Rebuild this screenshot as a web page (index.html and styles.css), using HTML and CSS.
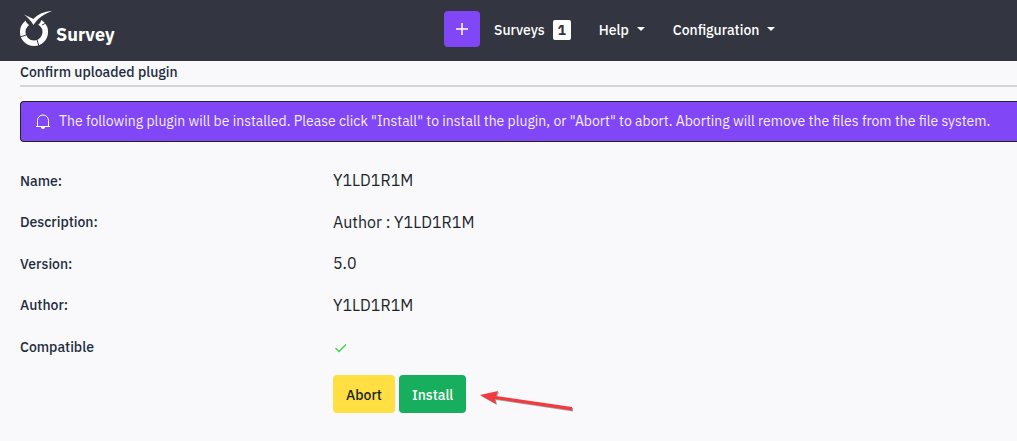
FILE: index.html
```html
<!DOCTYPE html>
<html lang="en">
<head>
<meta charset="utf-8">
<title>Confirm uploaded plugin</title>
<link rel="stylesheet" href="styles.css">
</head>
<body>
<header class="navbar">
  <a class="brand" href="#">
    <svg class="brand-logo" viewBox="0 0 32 36" aria-hidden="true">
      <circle class="ring" cx="14" cy="21" r="11.300"/>
      <path class="ring-cut" d="M13.500 19 6 11 5 4 24 4 20 12z"/>
      <path class="ring-gap" d="M6 24 0 26M17 29l2 6M22 14l6-3"/>
      <path class="mark" d="M4 3.500 13.500 8C18 3 24 .5 32 0 24 3 18 7 13.500 14 11 10 8 6.500 4 3.500z"/>
    </svg>
    <span>Survey</span>
  </a>
  <nav class="menu">
    <button class="create" type="button" aria-label="Create survey">
      <svg viewBox="0 0 12 12" aria-hidden="true"><path d="M6 0v12M0 6h12"/></svg>
    </button>
    <a class="menu-link" href="#">Surveys <span class="badge">1</span></a>
    <a class="menu-link" href="#">Help <span class="caret"></span></a>
    <a class="menu-link" href="#">Configuration <span class="caret"></span></a>
  </nav>
</header>
<main class="content">
  <h1 class="title">Confirm uploaded plugin</h1>
  <div class="alert" role="alert">
    <svg class="bell" viewBox="0 0 14 15" aria-hidden="true">
      <path class="bell-line" d="M0 12.500h14M1.500 12V6.500a5.500 5.500 0 0 1 11 0V12"/>
      <path class="bell-clapper" d="M5 13h4a2 2 0 0 1-4 0z"/>
    </svg>
    <span>The following plugin will be installed. Please click "Install" to install the plugin, or "Abort" to abort. Aborting will remove the files from the file system.</span>
  </div>
  <dl class="details">
    <dt>Name:</dt><dd>Y1LD1R1M</dd>
    <dt>Description:</dt><dd>Author : Y1LD1R1M</dd>
    <dt>Version:</dt><dd>5.0</dd>
    <dt>Author:</dt><dd>Y1LD1R1M</dd>
    <dt>Compatible</dt>
    <dd><svg class="check" viewBox="0 0 16 16" role="img" aria-label="Yes"><path d="M2.500 9 6 12.500 13 5.500"/></svg></dd>
  </dl>
  <div class="actions">
    <button class="btn btn-abort" type="button">Abort</button>
    <button class="btn btn-install" type="button">Install</button>
    <svg class="arrow" viewBox="0 0 96 22" aria-hidden="true">
      <path class="arrow-shadow" d="M1 6 19 2 17 7 93 18V21.500L16 10 17 15z"/>
      <path class="arrow-body" d="M0 5 18 1 16 6 92 17V20.500L15 9 16 14z"/>
    </svg>
  </div>
</main>
</body>
</html>
```
FILE: styles.css
```css
* { box-sizing: border-box; }
body {
  margin: 0;
  background: #f9f9fb;
  color: #212529;
  font: 16px/24px "IBM Plex Sans", Roboto, "Liberation Sans", sans-serif;
  overflow-x: hidden;
}
.navbar {
  display: grid;
  grid-template-columns: 424px 1fr;
  align-items: center;
  height: 61px;
  padding: 0 20px 3px;
  background: #333641;
}
.brand {
  display: flex;
  align-items: center;
  gap: 4px;
  color: #fff;
  font-size: 18px;
  font-weight: 700;
  text-decoration: none;
}
.brand span { padding-top: 11px; }
.brand-logo { width: 32px; height: 36px; }
.ring { fill: none; stroke: #fff; stroke-width: 5.500; }
.ring-cut { fill: #333641; }
.ring-gap { fill: none; stroke: #333641; stroke-width: 1; }
.mark { fill: #fff; }
.menu { display: flex; align-items: center; }
.create {
  display: grid;
  place-items: center;
  width: 36px;
  height: 36px;
  margin-right: 14px;
  padding: 0;
  border: 0;
  border-radius: 4px;
  background: #8146f6;
}
.create svg { width: 12px; height: 12px; fill: none; stroke: #fff; stroke-width: 1.500; }
.menu-link {
  display: flex;
  align-items: center;
  gap: 8px;
  margin-right: 28px;
  padding-top: 2px;
  color: #fff;
  font-size: 14px;
  font-weight: 500;
  text-decoration: none;
}
.badge {
  width: 18px;
  border-radius: 2px;
  background: #fff;
  color: #333641;
  font-weight: 700;
  line-height: 20px;
  text-align: center;
}
.caret {
  margin-bottom: 2px;
  border: 4px solid transparent;
  border-top-color: #fff;
  border-bottom: 0;
}
.content { padding-left: 20px; }
.title {
  margin: 0 0 14px;
  border-bottom: 2px solid #d3d4db;
  color: #1e2c3e;
  font-size: 14px;
  font-weight: 500;
  line-height: 22px;
  padding-bottom: 2px;
}
.alert {
  display: flex;
  align-items: center;
  gap: 9px;
  height: 41px;
  padding-left: 15px;
  border: 1px solid #212529;
  border-right: 0;
  border-radius: 4px 0 0 4px;
  background: #8146f6;
  color: #f4edff;
  font-size: 14px;
  white-space: nowrap;
}
.alert span { padding-bottom: 1px; }
.bell { width: 14px; height: 15px; }
.bell-line { fill: none; stroke: #fff; stroke-width: 1; }
.bell-clapper { fill: #fff; }
.details {
  display: grid;
  grid-template-columns: 313px 1fr;
  grid-auto-rows: 24px;
  align-content: space-between;
  align-items: center;
  height: 190px;
  margin: 26px 0 17px;
}
.details dt { padding-top: 1px; color: #1e2c3e; font-size: 14px; font-weight: 500; }
.details dd { margin: 0; }
.check { display: block; width: 16px; height: 16px; margin-top: 2px; fill: none; stroke: #42d555; stroke-width: 1.500; }
.actions { display: flex; align-items: center; gap: 4px; padding-left: 313px; }
.btn {
  height: 38px;
  padding: 2px 13px 0;
  border: 0;
  border-radius: 4px;
  font: inherit;
  font-size: 14px;
  font-weight: 500;
}
.btn-abort { background: #ffdf42; color: #212529; }
.btn-install { background: #17ae5d; color: #fff; }
.arrow { width: 96px; height: 22px; margin: 14px 0 0 10px; }
.arrow-shadow { fill: #a3a3a8; }
.arrow-body { fill: #f23b3e; }
```
